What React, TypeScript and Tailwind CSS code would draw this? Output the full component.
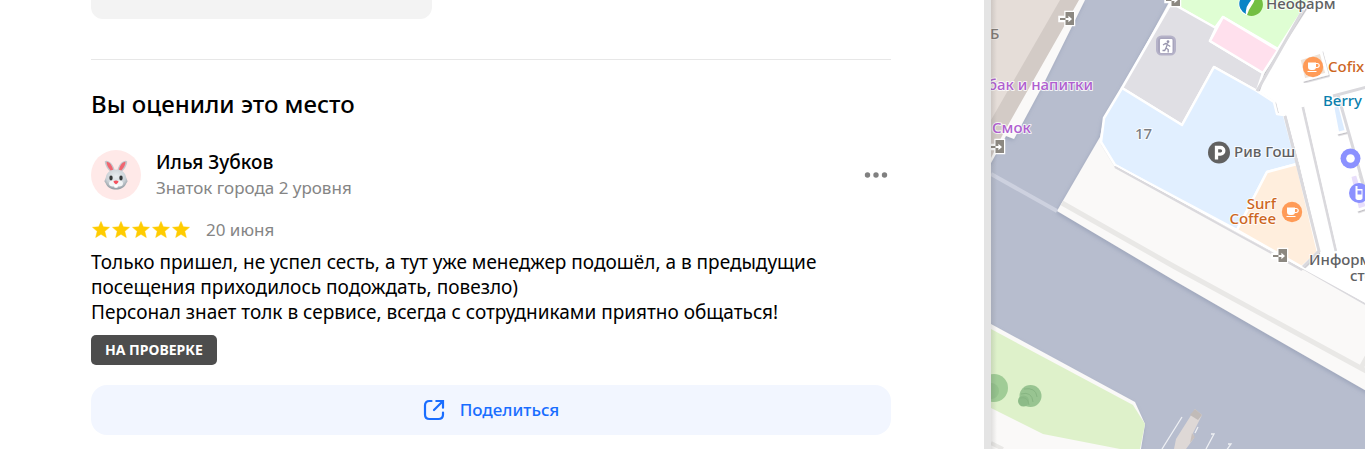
import React from "react";

function Star() {
  return (
    <svg viewBox="0 0 18 17" className="h-[17px] w-[18px]" aria-hidden="true">
      <path
        d="M9 .5l2.3 5.3 6.2.5-4.700 4 1.500 6.200L9 13.300l-5.300 3.200 1.500-6.200-4.700-4 6.200-.5z"
        fill="#ffcc00"
        stroke="#ffcc00"
        strokeWidth=".5"
        strokeLinejoin="round"
      />
    </svg>
  );
}

function Rabbit() {
  return (
    <svg viewBox="0 0 24 30" className="h-[30px] w-6" aria-hidden="true">
      <defs>
        <radialGradient id="fur" cx="50%" cy="35%" r="65%">
          <stop offset="0" stopColor="#e9edf0" />
          <stop offset=".65" stopColor="#cbd1d6" />
          <stop offset="1" stopColor="#8f989f" />
        </radialGradient>
      </defs>
      <path d="M8 13C3.500 10 .3 4 .9 1.200 3-.8 10 3 11 12z" fill="#c3c8cc" />
      <path d="M16 13c4.500-3 7.700-9 7.100-11.800C21-.8 14 3 13 12z" fill="#c3c8cc" />
      <path d="M7.600 11.500C4.500 8.500 2.300 4.500 2.600 1.800 5.500 1.800 8.800 6 9.300 11.500z" fill="#f0656f" />
      <path d="M16.400 11.500c3.100-3 5.300-7 5-9.700-2.900 0-6.200 4.200-6.700 9.700z" fill="#f0656f" />
      <path d="M12 9.500c6 0 9.600 3.500 10.200 8l1.400 3.800-1.400 2.200C20.500 27.500 16.500 29.500 12 29.500S3.500 27.500 1.800 23.500L.4 21.300l1.400-3.800c.6-4.500 4.200-8 10.200-8z" fill="url(#fur)" />
      <ellipse cx="9" cy="23.500" rx="4" ry="3" fill="#f3f5f6" />
      <ellipse cx="15" cy="23.500" rx="4" ry="3" fill="#f3f5f6" />
      <path d="M10.200 25h3.600v2.200c-1 .8-2.600.8-3.600 0z" fill="#fff" />
      <ellipse cx="7" cy="18" rx="1.700" ry="2.400" fill="#363839" />
      <ellipse cx="17" cy="18" rx="1.700" ry="2.400" fill="#363839" />
      <path d="M9.500 21.200c1.600-.8 3.400-.8 5 0 0 1.300-1.300 2.600-2.500 3-1.200-.4-2.500-1.700-2.500-3z" fill="#f4515e" />
    </svg>
  );
}

function ShareIcon() {
  return (
    <svg viewBox="0 0 22 22" className="size-[22px]" fill="none" stroke="#196dff" strokeWidth="2.200" aria-hidden="true">
      <path d="M8.500 2H6.500Q2 2 2 6.500v9Q2 20 6.500 20h9Q20 20 20 15.500v-2" strokeLinecap="round" />
      <path d="M11 11l8.500-8.500M13.300 2H20v6.700" strokeLinecap="round" />
    </svg>
  );
}

function Door({ x, y }: { x: number; y: number }) {
  return (
    <g transform={`translate(${x} ${y})`}>
      <path d="M5-.500h9.500v14H5V9.500H-1v-5h6z" fill="#fff" stroke="#fff" strokeWidth="1.500" />
      <path d="M5.500 0H14v13H5.500z" fill="#8c8881" />
      <path d="M0 6h6v2H0z" fill="#8c8881" />
      <path d="M5.500 6h2.900V3.800L12 7 8.400 10.200V8H5.500z" fill="#fff" />
    </g>
  );
}

function Cup({ x, y }: { x: number; y: number }) {
  return (
    <g transform={`translate(${x} ${y})`}>
      <circle r="10.200" fill="#ff9b57" />
      <path d="M-5-4.500h8v4.500q0 3-3 3h-2q-3 0-3-3z" fill="#fff" />
      <path d="M3-3.500h1.200a2 2 0 0 1 0 4H3M-5.500 4.500h9" fill="none" stroke="#fff" strokeWidth="1.200" />
    </g>
  );
}

function CityMap() {
  return (
    <svg
      viewBox="991 0 374 449"
      preserveAspectRatio="xMinYMin slice"
      className="block h-full w-full bg-[#b7bdce]"
      role="img"
      aria-label="Карта"
    >
      <defs>
        <filter id="shade" x="-10%" y="-10%" width="120%" height="120%">
          <feDropShadow dx="-1" dy="2" stdDeviation="2" floodColor="#7f8aa5" floodOpacity=".45" />
        </filter>
        <filter id="wall" x="-10%" y="-10%" width="120%" height="120%">
          <feDropShadow dx="1" dy="1.500" stdDeviation=".7" floodColor="#6b6876" floodOpacity=".4" />
        </filter>
        <linearGradient id="edge">
          <stop offset="0" stopColor="#555" stopOpacity=".16" />
          <stop offset="1" stopColor="#555" stopOpacity="0" />
        </linearGradient>
      </defs>
      <rect x="991" width="374" height="449" fill="#b7bdce" />

      <g filter="url(#shade)">
        <path d="M980 0H1085L1043 85 1014 139 1006 136 991 163H980z" fill="#faf9f8" />
        <path d="M1173-5L1122 88 1104 118 1100 137 1057 211 1175 281 1375 396V-5z" fill="#faf9f8" />
        <path d="M980 318L991 324 1135 402 1145 424 1140 455H980z" fill="#faf9f8" />
      </g>
      <path d="M985 0H1079L1003 134 991 158H985z" fill="#d3cbc6" />
      <path d="M985 0H1060L991 120H985z" fill="#e5ddd8" />

      <path d="M991 174L1057 211" stroke="#cdd1df" strokeWidth="4" />
      <path d="M1062 203L1175 267 1370 373M1361 368L1367 357" stroke="#e9e8e6" strokeWidth="5" fill="none" />

      <path d="M991 329L1133 405 1145 424 1140 449H1120L1043 434 991 408z" fill="#def1ca" />
      <path d="M991 443L1003 449" stroke="#e9e8e6" strokeWidth="4" />
      <circle cx="994" cy="388" r="14" fill="#a0cc96" />
      <circle cx="991" cy="391" r="8" fill="#94c28c" />
      <circle cx="1030.500" cy="396" r="11" fill="#98c491" />
      <circle cx="1023.500" cy="401" r="5.500" fill="#8dbb88" />
      <path d="M1024 389q12-2 13 8M1021 394q11-3 12 8M1020 398q8-2 9 7" fill="none" stroke="#87b582" strokeWidth="1" />

      <path d="M1308-5L1303 10 1257 91 1275 103 1277 113 1284 115 1318 250 1302 267 1370 306V-5z" fill="#fff" />

      <g stroke="#fff" strokeWidth="2.500" strokeLinejoin="round" filter="url(#wall)">
        <path d="M1175 5L1172-5H1313L1303 10 1278 49 1223 17 1215 28z" fill="#dffed3" />
        <path d="M1170 5H1175L1216 28 1210 41 1263 73 1257 91 1214 67 1182 125 1122 88z" fill="#e0dfe4" />
        <path d="M1223 17L1278 50 1263 73 1210 41z" fill="#ffe0ed" />
        <path d="M1122 88L1182 125 1214 67 1257 91 1274 102 1277 114 1284 115 1297 164 1267 172 1237 230 1115 165 1101 142 1104 118z" fill="#e1efff" />
        <path d="M1267 172L1297 164 1318 252 1302 267 1237 230z" fill="#ffeedd" />
        <path d="M1333 107L1339 104 1346 131 1338 133z" fill="#dcecff" />
        <path d="M1350 176L1357 174 1367 207 1358 210z" fill="#e8defb" />
      </g>
      <g fill="none" stroke="#dad9dd" strokeWidth="3">
        <path d="M1303 10L1257 91M1285 116L1319 251 1303 267M1303 107L1336 251" />
        <path d="M1333 96L1367 87M1338 95L1363 183 1367 199" />
        <path d="M1302 268L1367 305M1115 167L1302 270" strokeWidth="2" />
      </g>
      <g filter="url(#wall)">
        <path d="M1299 59L1321 52 1327 74 1304 80z" fill="#efe3d8" stroke="#fff" strokeWidth="3" />
      </g>
      <path d="M1305 107L1338 251M1116 165L1303 268 1367 303" fill="none" stroke="#fff" strokeWidth="1.500" />

      <path d="M1195 409L1202 415 1193 433 1194 438 1186 449H1174L1176 439z" fill="#ded8d6" />
      <path d="M1195 409L1202 415 1198 420 1190 415z" fill="#c1bbb8" />
      <path d="M1192 433l3 4-5 6z" fill="#c8c0bd" />
      <path d="M1182 417L1162 449M1198 427L1195 433M1211 434h3L1206 449M1228 444h3L1226 451" stroke="#eef0f4" strokeWidth="1.300" fill="none" />

      <Door x={1060} y={12} />
      <Door x={990} y={140} />
      <Door x={1166} y={-7} />
      <Door x={1273} y={249} />

      <rect x="1157" y="36.500" width="18" height="18" rx="4.500" fill="#a8a5bd" stroke="#b5b2c8" strokeWidth="2" />
      <rect x="1160" y="39" width="12.500" height="14" rx="1" fill="#fff" />
      <circle cx="1168" cy="41.700" r="1.400" fill="#9794ad" />
      <path d="M1163 45l2.500-1.500 2 .5-1.500 4 2.200 1.500v3M1166 48l-1.300 2.500h-2.200M1168 45l2.300 1.500" fill="none" stroke="#9794ad" strokeWidth="1.300" />

      <circle cx="1250" cy="4" r="11.500" fill="#fff" />
      <path d="M1252-7A11 11 0 0 0 1246 14Q1245 8 1249 3T1254-7z" fill="#0a84c6" />
      <path d="M1256-6A11 11 0 0 1 1247 15Q1249 9 1252 5T1256-6z" fill="#73bf43" />

      <circle cx="1219" cy="152.500" r="11" fill="#616161" />
      <path d="M1216.500 159.500V147.500h4a3.300 3.300 0 0 1 0 6.600h-4" fill="none" stroke="#fff" strokeWidth="3.300" />

      <Cup x={1313} y={67} />
      <Cup x={1292} y={212} />
      <circle cx="1350.500" cy="158.500" r="10" fill="#8b91ff" />
      <circle cx="1350.500" cy="158.500" r="4.300" fill="#fff" />
      <circle cx="1359" cy="193" r="10" fill="#8b91ff" />
      <path d="M1355.500 186v12q0 2 3.500 2t3.500-2v-9h-5v-3z" fill="#fff" />
      <path d="M1357.500 190.500h4v4h-4z" fill="#8b91ff" />

      <g
        fontFamily="'Noto Sans', sans-serif"
        fontSize="15"
        fontWeight="500"
        stroke="#fff"
        strokeOpacity=".8"
        strokeWidth="2"
        strokeLinejoin="round"
        style={{ paintOrder: "stroke" }}
      >
        <text x="990" y="39" fill="#807a76" strokeOpacity=".3">Б</text>
        <text x="1093" y="90" textAnchor="end" fill="#b05fd0">бак и напитки</text>
        <text x="992" y="133" fill="#b05fd0">Смок</text>
        <text x="1135" y="139" fill="#7c7e83">17</text>
        <text x="1266" y="9" fill="#5f6163">Неофарм</text>
        <text x="1234" y="157" fill="#5f6163">Рив Гош</text>
        <text x="1328" y="72" fill="#cd661e">Cofix</text>
        <text x="1323" y="106" fill="#0a7fae">Berry</text>
        <text x="1276" y="209" textAnchor="end" fill="#cd661e">Surf</text>
        <text x="1276" y="224" textAnchor="end" fill="#cd661e">Coffee</text>
        <text x="1309" y="265" fill="#5f6163">Информация</text>
        <text x="1350" y="281" fill="#5f6163">стенд</text>
      </g>
      <rect x="991" width="6" height="449" fill="url(#edge)" />
    </svg>
  );
}

export default function App() {
  return (
    <div className="flex min-h-screen bg-white font-['Noto_Sans',sans-serif] text-black">
      <main className="min-w-0 flex-1 pr-[93px] pl-[91px]">
        <div className="h-[19px] w-[341px] max-w-full rounded-b-xl bg-[#f3f3f3]" />
        <hr className="mt-10 border-[#e7e7e7]" />
        <h2 className="mt-7 text-2xl leading-8 font-medium">Вы оценили это место</h2>

        <article className="mt-[30px]">
          <header className="flex items-center">
            <div className="flex size-[50px] shrink-0 items-center justify-center rounded-full bg-[#ffe9e8]">
              <Rabbit />
            </div>
            <div className="ml-[15px] flex-1">
              <a href="#profile" className="block text-[19px] leading-[25px] font-medium">Илья Зубков</a>
              <p className="text-[17px] leading-[25px] text-[#858585]">Знаток города 2 уровня</p>
            </div>
            <button type="button" aria-label="Ещё" className="px-[3px] py-3">
              <svg viewBox="0 0 24 6" className="h-[6px] w-6" fill="#808080" aria-hidden="true">
                <circle cx="3.500" cy="3" r="2.700" />
                <circle cx="12" cy="3" r="2.700" />
                <circle cx="20.500" cy="3" r="2.700" />
              </svg>
            </button>
          </header>

          <div className="mt-[17px] flex h-[25px] items-center">
            <div className="flex gap-[2px] pl-px" role="img" aria-label="Оценка 5 из 5">
              <Star />
              <Star />
              <Star />
              <Star />
              <Star />
            </div>
            <time className="ml-4 text-[17px] leading-[25px] text-[#858585]">20 июня</time>
          </div>

          <p className="mt-2 text-[19px] leading-[25px]">
            Только пришел, не успел сесть, а тут уже менеджер подошёл, а в предыдущие
            <br />
            посещения приходилось подождать, повезло)
            <br />
            Персонал знает толк в сервисе, всегда с сотрудниками приятно общаться!
          </p>

          <span className="mt-2.5 flex h-[30px] w-fit items-center rounded-[5px] bg-[#4d4d4d] px-3.5 text-sm font-bold text-white">
            НА ПРОВЕРКЕ
          </span>

          <button
            type="button"
            className="mt-5 flex h-[50px] w-full items-center justify-center gap-[15px] rounded-2xl bg-[#f2f6ff] text-[17px] font-medium text-[#196dff]"
          >
            <ShareIcon />
            Поделиться
          </button>
        </article>
      </main>

      <aside className="relative w-[381px] shrink-0 border-l-[7px] border-[#e4e4e4]">
        <div className="absolute inset-0 overflow-hidden">
          <CityMap />
        </div>
      </aside>
    </div>
  );
}
